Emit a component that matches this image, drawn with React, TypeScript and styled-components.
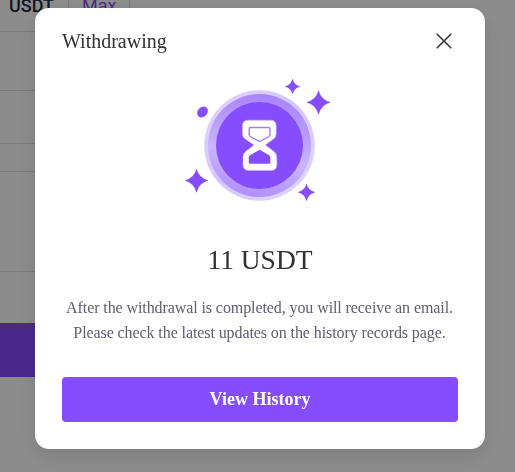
import styled, {createGlobalStyle} from "styled-components";

const colors = {
    accent: '#864dff',
    primary: '#ffffff',
    title: '#303036',
    text: '#5e5e6f',
    line: '#dddddd',
}

const App = () => {
    return (
        <>
            <GlobalStyle/>
            <Page>
                <AmountRow>
                    <Currency>USDT</Currency>
                    <MaxButton>Max</MaxButton>
                </AmountRow>
                <FormRow $height={59}/>
                <FormRow $height={53}/>
                <FormRow $height={28}/>
                <FormRow $height={100}/>
                <Submit/>
            </Page>
            <Overlay>
                <Modal role="dialog" aria-label="Withdrawing">
                    <Header>
                        <Title>Withdrawing</Title>
                        <CloseButton aria-label="Close">
                            <svg width="16" height="16" viewBox="0 0 16 16" fill="none">
                                <path d="M1.2 1.2 14.8 14.8M14.8 1.2 1.2 14.8" stroke="#35353b" strokeWidth="1.6" strokeLinecap="round"/>
                            </svg>
                        </CloseButton>
                    </Header>
                    <Coin/>
                    <Amount>11 USDT</Amount>
                    <Message>
                        After the withdrawal is completed, you will receive an email.<br/>
                        Please check the latest updates on the history records page.
                    </Message>
                    <HistoryButton>View History</HistoryButton>
                </Modal>
            </Overlay>
        </>
    );
};

export default App;

const Coin = () => (
    <CoinSvg width="160" height="140" viewBox="180 70 160 140" fill="none">
        <defs>
            <linearGradient id="outer" x1="0" y1="0" x2="1" y2="1">
                <stop offset="0" stopColor="#e0d4ff"/>
                <stop offset="0.5" stopColor="#d6c6ff"/>
                <stop offset="1" stopColor="#e2d8ff"/>
            </linearGradient>
            <linearGradient id="ring" x1="0.6" y1="0" x2="0.4" y2="1">
                <stop offset="0" stopColor="#a883ff"/>
                <stop offset="0.3" stopColor="#b799ff"/>
                <stop offset="0.6" stopColor="#c9b5ff"/>
                <stop offset="1" stopColor="#b08eff"/>
            </linearGradient>
        </defs>
        <circle cx="259.5" cy="145.5" r="55.3" fill="url(#outer)"/>
        <circle cx="259.5" cy="145.5" r="51.5" fill="url(#ring)"/>
        <circle cx="259.5" cy="145.5" r="43.5" fill="#864dff"/>
        {/* hourglass */}
        <path
            d="M248 120.200H270.500Q276.200 120.200 276.200 126V134Q276.200 137 273.500 139L265.300 145L273.800 151.300Q276.800 153.800 276.800 157V164.800Q276.800 170.400 271.200 170.400H248.800Q243 170.400 243 164.800V157Q243 153.800 245.800 151.300L254 145L245.200 139Q242.400 137 242.400 134V126Q242.400 120.200 248 120.200Z"
            fill="#fff" stroke="#c9b0ff" strokeWidth="0.6"
        />
        <path d="M250.500 127.500H268.500Q270 127.500 270 129V134.500Q270 135.800 269 136.500L259.600 141.500L250.200 136.500Q249.200 135.800 249.200 134.500V129Q249.200 127.500 250.500 127.500Z" stroke="#a37cff" strokeWidth="1.4"/>
        <path d="M259.600 149.800 268.800 155Q270.400 156 270.400 158V162.500Q270.400 163.800 269.200 163.800H250Q248.800 163.800 248.800 162.500V158Q248.800 156 250.400 155Z" fill="#864dff"/>
        {/* sparkles */}
        <g fill="#864dff" stroke="#864dff" strokeOpacity="0.25">
            <path d="M292.500 79Q294 85 300 86.500Q294 88 292.500 94Q291 88 285 86.500Q291 85 292.500 79Z"/>
            <path d="M318.500 90.500Q321 100 330.500 102.300Q321 104.600 318.500 114.500Q316 104.600 306.500 102.300Q316 100 318.500 90.500Z"/>
            <path d="M196.500 169Q199 178 208 180.500Q199 183 196.500 192.500Q194 183 185 180.500Q194 178 196.500 169Z"/>
            <path d="M306.500 184Q308.200 190.500 315 192.300Q308.200 194 306.500 201Q304.800 194 298 192.300Q304.800 190.500 306.500 184Z"/>
            <ellipse cx="202.500" cy="112" rx="5.800" ry="4.600" transform="rotate(-42 202.500 112)"/>
        </g>
    </CoinSvg>
)

const GlobalStyle = createGlobalStyle`
    * {
        box-sizing: border-box;
    }

    body {
        margin: 0;
        overflow: hidden;
        background-color: ${colors.primary};
        font-family: "Liberation Serif", "Times New Roman", serif;
    }
`

const Page = styled.main`
    height: 472px;
    padding-right: 65px;
    overflow: hidden;
`

const AmountRow = styled.div`
    display: flex;
    height: 32px;
    border-bottom: 1px solid ${colors.line};
    font-family: Roboto, sans-serif;
    font-size: 18px;
    line-height: 11px;
`

const Currency = styled.span`
    width: 69px;
    height: 14px;
    padding-left: 9px;
    border-right: 1px solid ${colors.line};
    color: #26263a;
    font-weight: 500;
`

const MaxButton = styled.span`
    width: 61px;
    height: 14px;
    padding-left: 13px;
    border-right: 1px solid ${colors.line};
    color: ${colors.accent};
`

const FormRow = styled.div<{ $height: number }>`
    height: ${({$height}) => $height}px;
    border-bottom: 1px solid ${colors.line};
`

const Submit = styled.div`
    height: 54px;
    margin-top: 51px;
    background-color: ${colors.accent};
`

const Overlay = styled.div`
    position: fixed;
    inset: 0;
    display: flex;
    justify-content: center;
    align-items: flex-start;
    padding: 8px 30px 0 35px;
    background-color: rgba(0, 0, 0, 0.45);
`

const Modal = styled.section`
    display: flex;
    flex-direction: column;
    align-items: center;
    width: 450px;
    height: 441px;
    padding: 20px 27px 27px;
    border-radius: 14px;
    background-color: ${colors.primary};
    box-shadow: 0 6px 16px rgba(0, 0, 0, 0.08), 0 9px 28px rgba(0, 0, 0, 0.05);
`

const Header = styled.header`
    display: flex;
    justify-content: space-between;
    align-items: center;
    width: 100%;
    height: 26px;
`

const Title = styled.h1`
    margin: 0;
    color: ${colors.title};
    font-size: 20px;
    font-weight: 400;
    line-height: 26px;
`

const CloseButton = styled.button`
    display: flex;
    padding: 0;
    margin-right: 6px;
    border: none;
    background: none;
    cursor: pointer;
`

const CoinSvg = styled.svg`
    flex-shrink: 0;
    margin-top: 16px;
`

const Amount = styled.h2`
    margin: 34px 0 0;
    color: ${colors.title};
    font-size: 27.5px;
    font-weight: 400;
    line-height: 32px;
`

const Message = styled.p`
    margin: 19px 1px 0 0;
    color: ${colors.text};
    font-size: 16px;
    letter-spacing: -0.09px;
    line-height: 25px;
    text-align: center;
    white-space: nowrap;
`

const HistoryButton = styled.button`
    width: 100%;
    height: 45px;
    margin-top: auto;
    padding: 0;
    border: none;
    border-radius: 4px;
    background-color: ${colors.accent};
    color: ${colors.primary};
    font-family: inherit;
    font-size: 18px;
    font-weight: 700;
    cursor: pointer;
`
